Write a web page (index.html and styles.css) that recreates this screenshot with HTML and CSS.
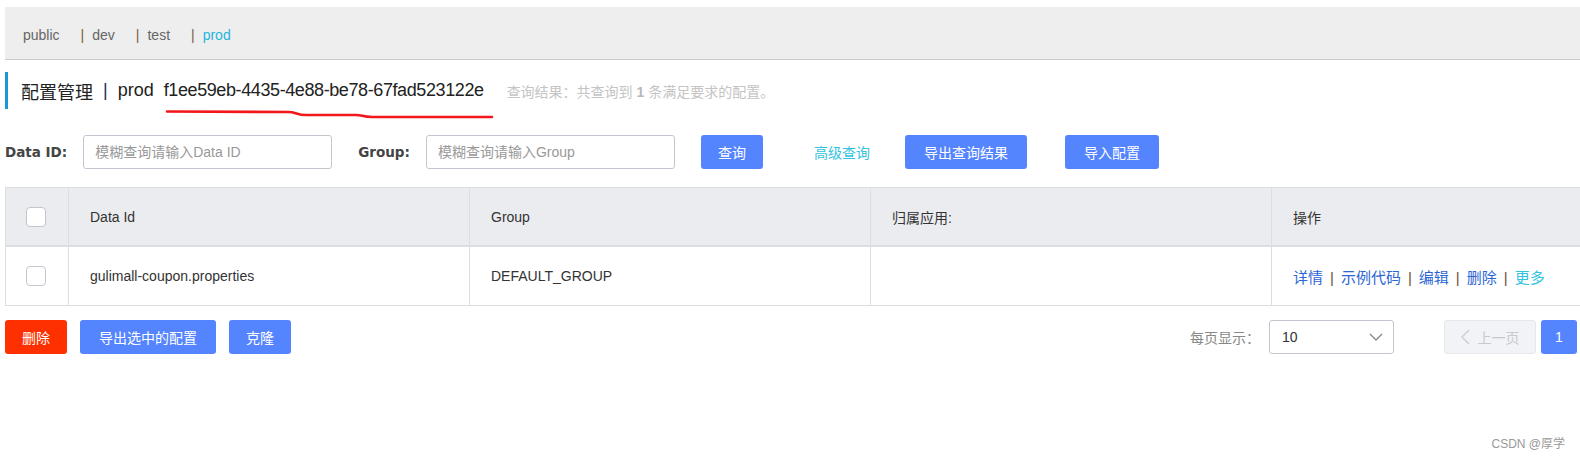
FILE: index.html
```html
<!DOCTYPE html>
<html lang="zh-CN">
<head>
<meta charset="utf-8">
<title>配置管理</title>
<link rel="stylesheet" href="styles.css">
</head>
<body>
<div class="page">
  <div class="ns-bar">
    <span class="ns">public</span>
    <span class="ns"><span class="sep">|</span>dev</span>
    <span class="ns"><span class="sep">|</span>test</span>
    <span class="ns active"><span class="sep">|</span>prod</span>
  </div>

  <div class="title-row">
    <div class="title">
      <span>配置管理</span><span class="title-sep">|</span><span>prod</span><span class="ns-id">f1ee59eb-4435-4e88-be78-67fad523122e</span>
    </div>
    <div class="result">查询结果：共查询到 <b>1</b> 条满足要求的配置。</div>
  </div>

  <div class="search">
    <label class="field-label">Data ID:</label>
    <input class="input" type="text" placeholder="模糊查询请输入Data ID">
    <label class="field-label group-label">Group:</label>
    <input class="input" type="text" placeholder="模糊查询请输入Group">
    <button class="btn primary query">查询</button>
    <a class="link adv">高级查询</a>
    <button class="btn primary wide export">导出查询结果</button>
    <button class="btn primary wide import">导入配置</button>
  </div>

  <table class="grid">
    <colgroup>
      <col class="c-check"><col class="c-id"><col class="c-group"><col class="c-app"><col class="c-op">
    </colgroup>
    <thead>
      <tr>
        <th class="check"><span class="checkbox"></span></th>
        <th>Data Id</th>
        <th>Group</th>
        <th>归属应用:</th>
        <th>操作</th>
      </tr>
    </thead>
    <tbody>
      <tr>
        <td class="check"><span class="checkbox"></span></td>
        <td>gulimall-coupon.properties</td>
        <td>DEFAULT_GROUP</td>
        <td></td>
        <td class="ops"><a>详情</a><span class="op-sep">|</span><a>示例代码</a><span class="op-sep">|</span><a>编辑</a><span class="op-sep">|</span><a>删除</a><span class="op-sep">|</span><a class="more">更多</a></td>
      </tr>
    </tbody>
  </table>

  <div class="footer">
    <div class="batch">
      <button class="btn danger">删除</button>
      <button class="btn primary wide">导出选中的配置</button>
      <button class="btn primary">克隆</button>
    </div>
    <div class="pager">
      <span class="size-label">每页显示：</span>
      <div class="select">
        <span>10</span>
        <svg class="chev" width="14" height="8" viewBox="0 0 14 8"><path d="M1 1 L7 7 L13 1" fill="none" stroke="#888" stroke-width="1.3"/></svg>
      </div>
      <button class="page-btn prev"><svg width="9" height="16" viewBox="0 0 9 16"><path d="M8 1 L1 8 L8 15" fill="none" stroke="#cfd0d4" stroke-width="1.5"/></svg><span>上一页</span></button>
      <button class="page-btn current">1</button>
    </div>
  </div>

  <svg class="scribble" width="340" height="16" viewBox="0 0 340 16"><path d="M7 5.5 L128 6 C136 6 137 9 146 9 L196 9 C202 9 203 11 212 11 L332 11" fill="none" stroke="#f2171b" stroke-width="2.6" stroke-linecap="round"/></svg>
</div>
<div class="watermark">CSDN @厚学</div>
</body>
</html>
```

FILE: styles.css
```css
html, body {
  margin: 0;
  padding: 0;
  background: #fff;
  overflow: hidden;
}

body {
  font-family: "Liberation Sans", "Noto Sans CJK SC", sans-serif;
  font-size: 14px;
  color: #333;
  width: 1580px;
  height: 459px;
  position: relative;
}

.page {
  position: relative;
  padding: 7px 0 0 5px;
}

/* namespace bar */
.ns-bar {
  height: 48px;
  padding-top: 4px;
  background: #eeeeee;
  border-bottom: 1px solid #cccccc;
  display: flex;
  align-items: center;
  padding-left: 18px;
  color: #666;
  font-size: 14px;
}
.ns + .ns { margin-left: 21px; }
.ns .sep {
  color: #7a5a44;
  margin-right: 8px;
}
.ns.active { color: #26b5dc; }

/* title */
.title-row {
  margin-top: 12px;
  height: 37px;
  border-left: 3px solid #1a98d5;
  padding-left: 13px;
  display: flex;
  align-items: center;
}
.title {
  font-size: 18px;
  color: #222;
  display: flex;
  align-items: center;
}
.title-sep {
  margin: 0 10px;
  color: #1a2a5a;
}
.ns-id {
  margin-left: 10px;
  letter-spacing: -0.4px;
}
.result {
  margin-left: 23px;
  color: #c4c4c4;
  font-size: 14px;
}
.result b { color: #b8b8b8; }

/* search */
.search {
  margin-top: 26px;
  display: flex;
  align-items: center;
  height: 34px;
}
.field-label {
  font-family: "DejaVu Sans", sans-serif;
  font-weight: bold;
  font-size: 13.5px;
  color: #444;
}
.group-label { margin-left: 26px; }
.input {
  box-sizing: border-box;
  width: 249px;
  height: 34px;
  margin-left: 16px;
  border: 1px solid #c4c6cf;
  border-radius: 3px;
  padding: 0 11px;
  font-family: "Liberation Sans", "Noto Sans CJK SC", sans-serif;
  font-size: 14px;
  color: #333;
  outline: none;
}
.input::placeholder { color: #999; }

.btn {
  box-sizing: border-box;
  height: 34px;
  padding: 0 17px;
  border: none;
  border-radius: 3px;
  font-family: "Liberation Sans", "Noto Sans CJK SC", sans-serif;
  font-size: 14px;
  color: #fff;
  cursor: pointer;
}
.btn.wide { padding: 0 19px; }
.btn.primary { background: #5584ff; }
.btn.danger { background: #ff3000; }
.query { margin-left: 26px; }
.link { color: #33c3e0; cursor: pointer; }
.adv { margin-left: 51px; }
.export { margin-left: 35px; }
.import { margin-left: 38px; }

/* table */
.grid {
  margin-top: 18px;
  width: 1577px;
  border-collapse: collapse;
  table-layout: fixed;
}
.c-check { width: 63px; }
.c-id { width: 401px; }
.c-group { width: 401px; }
.c-app { width: 401px; }
.grid th, .grid td {
  border: 1px solid #dcdee3;
  text-align: left;
  font-weight: normal;
  padding: 0 0 0 21px;
  font-size: 14px;
  color: #333;
}
.grid th {
  background: #ebecf0;
  height: 57px;
  border-bottom: 2px solid #dcdee3;
}
.grid td { height: 58px; }
.grid .check { padding-left: 20px; }
.checkbox {
  display: block;
  box-sizing: border-box;
  width: 20px;
  height: 20px;
  border: 1px solid #c4c6cf;
  border-radius: 4px;
  background: #fff;
}
.grid td.ops { font-size: 15px; }
.ops a { color: #2c66d6; cursor: pointer; }
.ops a.more { color: #33c3e0; }
.op-sep { margin: 0 7px; color: #6b5040; }

/* footer */
.footer {
  margin-top: 14px;
  display: flex;
  justify-content: space-between;
  align-items: center;
  width: 1572px;
}
.batch { display: flex; gap: 13px; }
.pager {
  display: flex;
  align-items: center;
}
.size-label { color: #888; }
.select {
  box-sizing: border-box;
  width: 125px;
  height: 34px;
  margin-left: 9px;
  border: 1px solid #c4c6cf;
  border-radius: 3px;
  padding: 0 10px 0 12px;
  display: flex;
  align-items: center;
  justify-content: space-between;
  color: #333;
}
.page-btn {
  box-sizing: border-box;
  height: 34px;
  border-radius: 3px;
  font-family: "Liberation Sans", "Noto Sans CJK SC", sans-serif;
  font-size: 14px;
  display: flex;
  align-items: center;
  justify-content: center;
}
.prev {
  width: 92px;
  margin-left: 50px;
  background: #f2f3f7;
  border: 1px solid #e6e7eb;
  color: #c8c9cc;
  gap: 8px;
}
.current {
  width: 36px;
  margin-left: 5px;
  background: #5584ff;
  border: none;
  color: #fff;
}

/* hand-drawn annotation over the title */
.scribble {
  position: absolute;
  left: 160px;
  top: 106px;
  pointer-events: none;
}

.watermark {
  position: absolute;
  right: 15px;
  bottom: 8px;
  font-size: 12px;
  color: #999;
}
```
